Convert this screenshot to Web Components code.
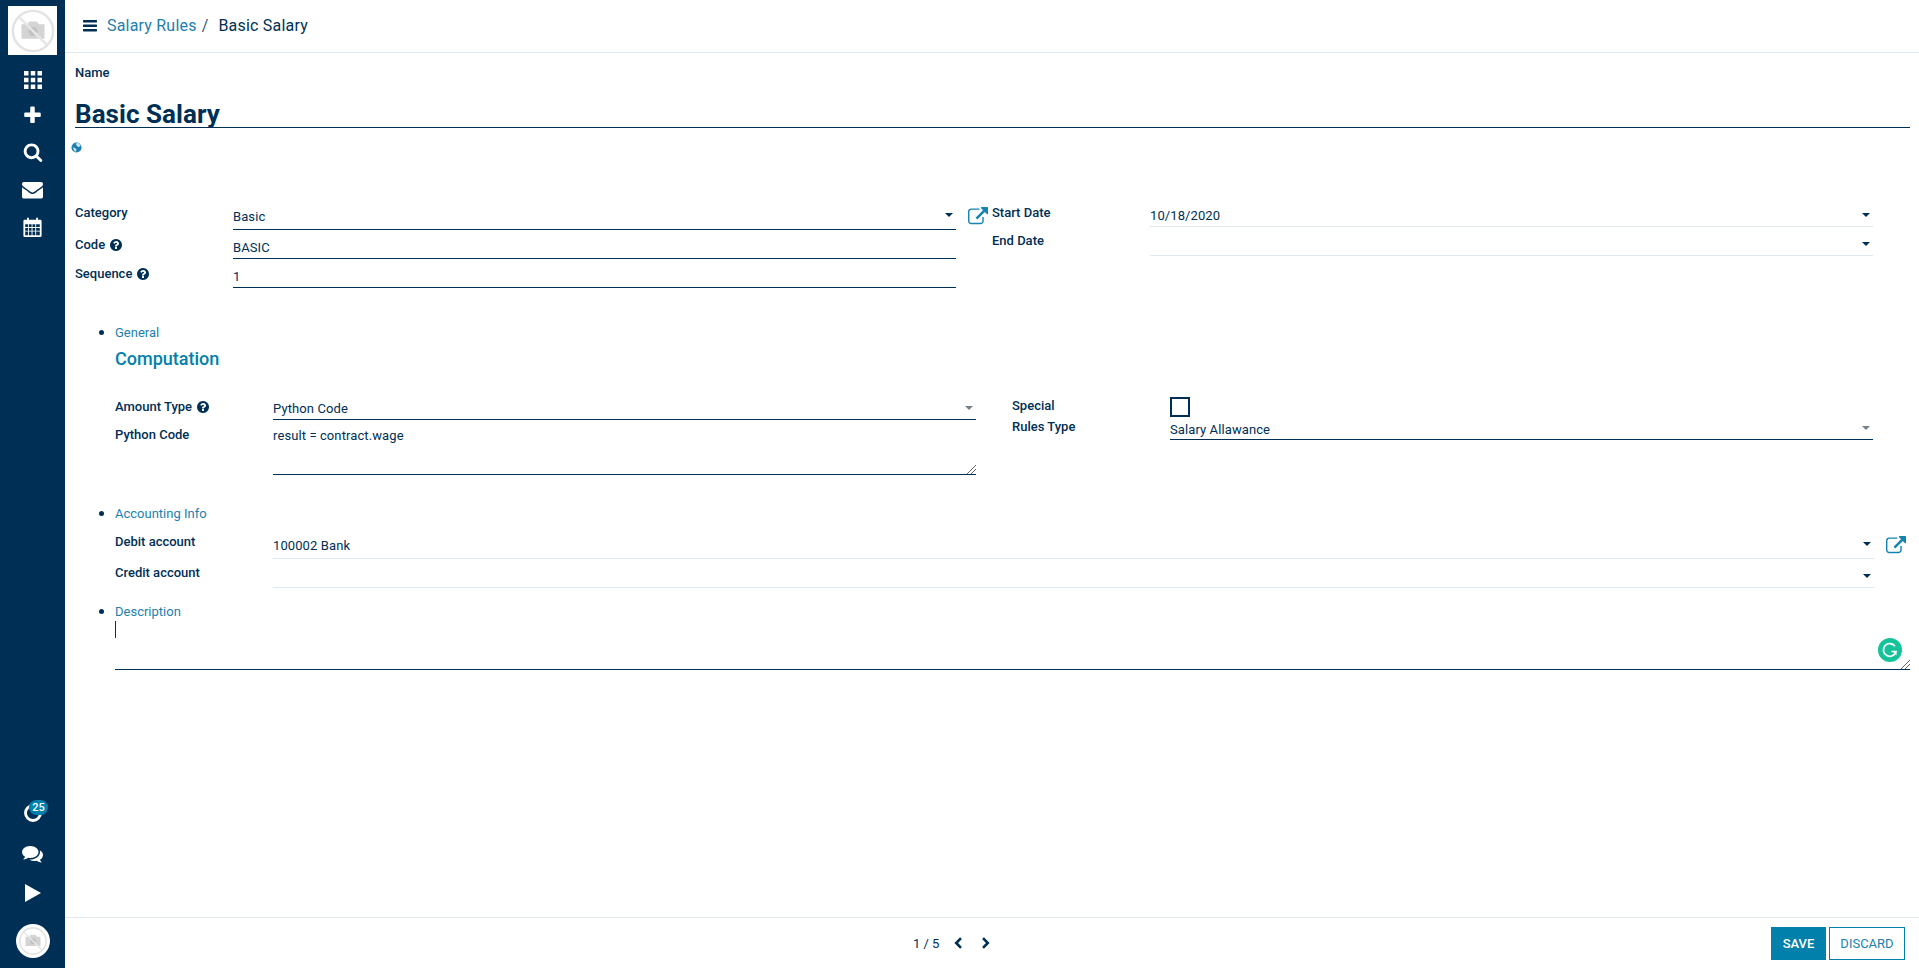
<!DOCTYPE html>
<html>
<head>
<meta charset="utf-8">
<title>Basic Salary</title>
<style>
  html, body { margin: 0; height: 100%; background: #fff; overflow: hidden; }
  body { font: 13px/15px Roboto, sans-serif; color: #002f55; }
</style>
</head>
<body>
<app-shell>
  <app-sidebar slot="side"></app-sidebar>
  <app-header slot="head" parent="Salary Rules" current="Basic Salary"></app-header>

  <title-field label="Name" value="Basic Salary"></title-field>

  <form-columns>
    <div slot="left">
      <form-field label="Category" value="Basic" caret style="--label-top:4px;--value-bottom:5px;--caret-bottom:12px"></form-field>
      <form-field label="Code" value="BASIC" help></form-field>
      <form-field label="Sequence" value="1" help></form-field>
    </div>
    <open-link slot="link"></open-link>
    <div slot="right">
      <form-field label="Start Date" value="10/18/2020" caret light style="--label-top:4px;--value-bottom:3px;--row:26px"></form-field>
      <form-field label="End Date" caret light style="--label-top:6px;--value-bottom:4px"></form-field>
    </div>
  </form-columns>

  <tab-page label="General" style="--page-top:37px">
    <h2-title>Computation</h2-title>
    <split-group>
      <div slot="left">
        <form-field label="Amount Type" value="Python Code" caret muted help style="--label-top:4px;--value-bottom:3px;--row:25px"></form-field>
        <form-field label="Python Code" value="result = contract.wage" multiline style="--label-top:7px;--row:55px"></form-field>
      </div>
      <div slot="right">
        <check-field label="Special"></check-field>
        <form-field label="Rules Type" value="Salary Allawance" caret muted style="--label-top:0;--value-bottom:2px;--row:21px"></form-field>
      </div>
    </split-group>
  </tab-page>

  <tab-page label="Accounting Info" style="--page-top:28px">
    <account-row>
      <form-field label="Debit account" value="100002 Bank" caret light style="--label-top:13px;--value-bottom:5px;--row:38px;--caret-bottom:12px"></form-field>
      <form-field label="Credit account" caret light style="--label-top:6px"></form-field>
      <open-link slot="link"></open-link>
    </account-row>
  </tab-page>

  <tab-page label="Description" style="--page-top:16px">
    <note-box></note-box>
  </tab-page>

  <app-footer slot="foot" page="1 / 5"></app-footer>
</app-shell>

<script>
const FA = {
  envelope: 'M1792 710v794q0 66-47 113t-113 47h-1472q-66 0-113-47t-47-113v-794q44 49 101 87 362 246 497 345 57 42 92.5 65.5t94.5 48 110 24.5h2q51 0 110-24.5t94.5-48 92.5-65.5q170-123 498-345 57-39 100-87zm0-294q0 79-49 151t-122 123q-376 261-468 325-10 7-42.5 30.5t-54 38-52 32.5-57.5 27-50 9h-2q-23 0-50-9t-57.5-27-52-32.5-54-38-42.5-30.5q-91-64-262-182.5t-205-142.5q-62-42-117-115.5t-55-136.5q0-78 41.5-130t118.5-52h1472q65 0 112.5 47t47.5 113z',
  search: 'M1216 832q0-185-131.5-316.5t-316.5-131.5-316.5 131.5-131.5 316.5 131.5 316.5 316.5 131.5 316.5-131.5 131.5-316.5zm512 832q0 52-38 90t-90 38q-54 0-90-38l-343-342q-179 124-399 124-143 0-273.5-55.5t-225-150-150-225-55.5-273.5 55.5-273.5 150-225 225-150 273.5-55.5 273.5 55.5 225 150 150 225 55.5 273.5q0 220-124 399l343 343q37 37 37 90z',
  plus: 'M1600 736v192q0 40-28 68t-68 28h-416v416q0 40-28 68t-68 28h-192q-40 0-68-28t-28-68v-416h-416q-40 0-68-28t-28-68v-192q0-40 28-68t68-28h416v-416q0-40 28-68t68-28h192q40 0 68 28t28 68v416h416q40 0 68 28t28 68z',
  external: 'M1408 928v320q0 119-84.5 203.5t-203.5 84.5h-832q-119 0-203.5-84.5t-84.5-203.5v-832q0-119 84.5-203.5t203.5-84.5h704q14 0 23 9t9 23v64q0 14-9 23t-23 9h-704q-66 0-113 47t-47 113v832q0 66 47 113t113 47h832q66 0 113-47t47-113v-320q0-14 9-23t23-9h64q14 0 23 9t9 23zm384-864v512q0 26-19 45t-45 19-45-19l-176-176-652 652q-10 10-23 10t-23-10l-114-114q-10-10-10-23t10-23l652-652-176-176q-19-19-19-45t19-45 45-19h512q26 0 45 19t19 45z',
  comments: 'M1408 768q0 139-94 257t-256.5 186.5-353.5 68.5q-86 0-176-16-124 88-278 128-36 9-86 16h-3q-11 0-20.5-8t-11.5-21q-1-3-1-6.5t.5-6.5 2-6l2.5-5 3.5-5.5 4-5 4.5-5 4-4.5q5-6 23-25t26-29.5 22.5-29 25-38.5 20.5-44q-124-72-195-177t-71-224q0-139 94-257t256.5-186.5 353.5-68.5 353.5 68.5 256.5 186.5 94 257zm384 256q0 120-71 224.5t-195 176.5q10 24 20.5 44t25 38.5 22.5 29 26 29.5 23 25q1 1 4 4.5t4.5 5 4 5 3.5 5.5l2.5 5 2 6 .5 6.5-1 6.5q-3 14-13 22t-22 7q-50-7-86-16-154-40-278-128-90 16-176 16-271 0-472-132 58 4 88 4 161 0 309-45t264-129q125-92 192-212t67-254q0-77-23-152 129 71 204 178t75 230z',
  question: 'M1024 1376v-192q0-14-9-23t-23-9h-192q-14 0-23 9t-9 23v192q0 14 9 23t23 9h192q14 0 23-9t9-23zm256-672q0-88-55.5-163t-138.5-116-170-41q-243 0-371 213-15 24 8 42l132 100q7 6 19 6 16 0 25-12 53-68 86-92 34-24 86-24 48 0 85.5 26t37.5 59q0 38-20 61t-68 45q-63 28-115.5 86.5t-52.5 125.5v36q0 14 9 23t23 9h192q14 0 23-9t9-23q0-19 21.5-49.5t54.5-49.5q32-18 49-28.5t46-35 44.5-48 28-60.5 12.5-81zm384 192q0 209-103 385.5t-279.5 279.5-385.5 103-385.5-103-279.5-279.5-103-385.5 103-385.5 279.5-279.5 385.5-103 385.5 103 279.5 279.5 103 385.5z'
};

const faIcon = (name, size, color) =>
  `<svg width="${size}" height="${size}" viewBox="0 0 1792 1792" fill="${color}"><path d="${FA[name]}"/></svg>`;

// grey "no picture" placeholder used for the company logo and the user avatar
const noImage = (size) => `
  <svg width="${size}" height="${size}" viewBox="0 0 48 48">
    <circle cx="24" cy="24" r="21" fill="none" stroke="#e3e3e3" stroke-width="2.6"/>
    <path d="M12 17h6l2-3h8l2 3h6v15H12z" fill="#d4d4d4"/>
    <circle cx="24" cy="24.500" r="4.800" fill="#c2c2c2"/>
    <path d="M10 10l28 28" stroke="#e6e6e6" stroke-width="2.6"/>
  </svg>`;

function define(tag, html, setup) {
  customElements.define(tag, class extends HTMLElement {
    constructor() {
      super();
      this.attachShadow({ mode: 'open' });
    }
    connectedCallback() {
      this.shadowRoot.innerHTML = typeof html === 'function' ? html(this) : html;
      if (setup) setup(this);
    }
  });
}

define('app-shell', `
  <style>
    :host { display: grid; grid-template-columns: 65px 1fr; grid-template-rows: 53px 1fr 51px; height: 968px; }
    .side { grid-row: 1 / 4; display: flex; }
    .body { padding-left: 10px; padding-right: 9px; min-width: 0; }
  </style>
  <div class="side"><slot name="side"></slot></div>
  <slot name="head"></slot>
  <div class="body"><slot></slot></div>
  <slot name="foot"></slot>
`);

define('app-sidebar', `
  <style>
    :host { display: flex; flex-direction: column; align-items: center; width: 65px; background: #002f55; padding: 6px 0 10px; box-sizing: border-box; }
    .logo { width: 49px; height: 49px; background: #fff; display: flex; align-items: center; justify-content: center; margin-bottom: 7px; }
    .item { height: 37px; width: 65px; display: flex; align-items: center; justify-content: center; position: relative; }
    .item.tight { height: 35px; }
    .item.lift { height: 35px; margin-bottom: 2px; }
    .low { height: 40px; }
    .space { flex: 1; }
    .badge { position: absolute; left: 29px; top: 7px; width: 19px; height: 14px; padding-top: 1px; border-radius: 8px; background: #0180ab; color: #fff; font: 500 11px/14px Roboto, sans-serif; text-align: center; }
    .avatar { width: 34px; height: 34px; border-radius: 50%; background: #fff; margin-top: 11px; display: flex; align-items: center; justify-content: center; }
  </style>
  <div class="logo">${noImage(46)}</div>
  <div class="item tight">
    <svg width="18" height="18" viewBox="0 0 18 18" fill="#fff">
      <rect width="4.500" height="4.500"/><rect x="6.750" width="4.500" height="4.500"/><rect x="13.500" width="4.500" height="4.500"/>
      <rect y="6.750" width="4.500" height="4.500"/><rect x="6.750" y="6.750" width="4.500" height="4.500"/><rect x="13.500" y="6.750" width="4.500" height="4.500"/>
      <rect y="13.500" width="4.500" height="4.500"/><rect x="6.750" y="13.500" width="4.500" height="4.500"/><rect x="13.500" y="13.500" width="4.500" height="4.500"/>
    </svg>
  </div>
  <div class="item">${faIcon('plus', 21, '#fff')}</div>
  <div class="item lift">${faIcon('search', 20, '#fff')}</div>
  <div class="item">${faIcon('envelope', 21, '#fff')}</div>
  <div class="item">
    <svg width="19" height="20" viewBox="0 0 20 22" fill="#fff">
      <path fill-rule="evenodd" d="M1.5 3H4V1.5a1 1 0 0 1 2 0V3h8V1.500a1 1 0 0 1 2 0V3h2.500A1.500 1.500 0 0 1 20 4.500V20.500A1.500 1.500 0 0 1 18.500 22h-17A1.500 1.500 0 0 1 0 20.500V4.500A1.500 1.500 0 0 1 1.500 3zM2 8v3h3V8zm4 0v3h3V8zm4 0v3h3V8zm4 0v3h4V8zM2 12v3h3v-3zm4 0v3h3v-3zm4 0v3h3v-3zm4 0v3h4v-3zM2 16v4h3v-4zm4 0v4h3v-4zm4 0v4h3v-4zm4 0v4h4v-4z"/>
    </svg>
  </div>
  <div class="space"></div>
  <div class="item low">
    <svg width="22" height="22" viewBox="0 0 22 22"><circle cx="11" cy="11" r="7.500" fill="none" stroke="#fff" stroke-width="2.800"/></svg>
    <span class="badge">25</span>
  </div>
  <div class="item low">${faIcon('comments', 21, '#fff')}</div>
  <div class="item low">
    <svg width="18" height="20" viewBox="0 0 18 20"><path d="M1 1l16 9-16 9z" fill="#fff"/></svg>
  </div>
  <div class="avatar">${noImage(30)}</div>
`);

define('app-header', (el) => `
  <style>
    :host { display: flex; align-items: center; height: 53px; box-sizing: border-box; border-bottom: 1px solid #dfe7f0; padding: 0 0 1px 18px; font-size: 16px; line-height: 20px; letter-spacing: .2px; }
    svg { margin-right: 10px; }
    a { color: #1d7fae; }
    .sep { margin: 0 10px 0 5px; color: #33587a; }
  </style>
  <svg width="14" height="12" viewBox="0 0 14 12" fill="#002f55"><rect width="14" height="2.400" rx=".6"/><rect y="4.500" width="14" height="2.400" rx=".6"/><rect y="9" width="14" height="2.400" rx=".6"/></svg>
  <a>${el.getAttribute('parent')}</a><span class="sep">/</span><span>${el.getAttribute('current')}</span>
`);

define('title-field', (el) => `
  <style>
    :host { display: block; height: 148px; }
    .label { font-weight: 500; padding-top: 12px; }
    .name { font: 700 26px/30px Roboto, sans-serif; margin-top: 19px; height: 28px; border-bottom: 1px solid #002f55; letter-spacing: .05px; }
    svg { display: block; margin: 14px 0 0 -4px; }
  </style>
  <div class="label">${el.getAttribute('label')}</div>
  <div class="name">${el.getAttribute('value')}</div>
  <svg width="11" height="11" viewBox="0 0 12 12">
    <circle cx="6" cy="6" r="5.500" fill="#1d7fae"/>
    <path d="M5 1.500l3-.5 2.500 2.500L9 5.500 7 5 6 3.500zM2 6l2.500.5 1.500 2-1 2.500-1.500-1.500z" fill="#cfe3ee"/>
  </svg>
`);

define('form-columns', `
  <style>
    :host { display: grid; grid-template-columns: 881px 36px 881px; height: 87px; }
    .link { padding: 6px 0 0 12px; }
  </style>
  <slot name="left"></slot>
  <div class="link"><slot name="link"></slot></div>
  <slot name="right"></slot>
`);

define('form-field', (el) => {
  const help = el.hasAttribute('help') ? `<svg width="12" height="12" viewBox="128 128 1536 1536" fill="#002f55"><path d="${FA.question}"/></svg>` : '';
  const caret = el.hasAttribute('caret') ? '<i class="caret"></i>' : '';
  const grip = el.hasAttribute('multiline') ? `<svg class="grip" width="9" height="9" viewBox="0 0 9 9" stroke="#666" fill="none"><path d="M0 9l9-9M4 9l5-5"/></svg>` : '';
  return `
  <style>
    :host { display: grid; grid-template-columns: var(--label-width, 158px) 1fr; height: var(--row, 29px); }
    .label { font-weight: 500; padding-top: var(--label-top, 7px); display: flex; align-items: flex-start; gap: 5px; }
    .label svg { margin-top: 1.500px; }
    .value { position: relative; border-bottom: 1px solid ${el.hasAttribute('light') ? '#dfe7f0' : '#002f55'}; padding: ${el.hasAttribute('multiline') ? '8px 0 0' : '0 0 var(--value-bottom, 3px)'}; display: flex; align-items: ${el.hasAttribute('multiline') ? 'flex-start' : 'flex-end'}; letter-spacing: .1px; }
    .caret { position: absolute; right: 3px; bottom: var(--caret-bottom, 9px); border: 4px solid transparent; border-top-color: ${el.hasAttribute('muted') ? '#73808c' : '#002f55'}; border-bottom: 0; }
    .grip { position: absolute; right: 0; bottom: 0; }
    span { display: block; }
  </style>
  <div class="label">${el.getAttribute('label')}${help}</div>
  <div class="value"><span>${el.getAttribute('value') || ''}</span>${caret}${grip}</div>`;
});

define('open-link', `
  <style>
    :host { display: block; width: 20px; height: 20px; }
    svg { display: block; }
  </style>
  ${faIcon('external', 20, '#1483b0')}
`);

define('tab-page', (el) => `
  <style>
    :host { display: block; position: relative; margin: var(--page-top, 0) 0 0 40px; }
    :host::before { content: ""; position: absolute; left: -16px; top: 5px; width: 5px; height: 5px; border-radius: 50%; background: #002f55; }
    .tab { color: #1d7fae; height: 15px; }
  </style>
  <div class="tab">${el.getAttribute('label')}</div>
  <slot></slot>
`);

define('h2-title', `
  <style>
    :host { display: block; color: #0180ab; font: 500 18px/22px Roboto, sans-serif; margin: 8px 0 25px; }
  </style>
  <slot></slot>
`);

define('split-group', `
  <style>
    :host { display: grid; grid-template-columns: 861px 861px; column-gap: 36px; height: 83px; }
  </style>
  <slot name="left"></slot>
  <slot name="right"></slot>
`);

define('check-field', (el) => `
  <style>
    :host { display: grid; grid-template-columns: 158px 1fr; height: 24px; }
    .label { font-weight: 500; padding-top: 3px; }
    .box { width: 16px; height: 16px; border: 2px solid #002f55; margin-top: 2px; }
  </style>
  <div class="label">${el.getAttribute('label')}</div>
  <div class="box"></div>
`);

define('account-row', `
  <style>
    :host { display: grid; grid-template-columns: 1759px 20px; column-gap: 12px; }
    .fields { display: block; }
    .link { padding-top: 15px; }
  </style>
  <div class="fields"><slot></slot></div>
  <div class="link"><slot name="link"></slot></div>
`);

define('note-box', `
  <style>
    :host { display: block; position: relative; height: 49px; margin-top: 1px; border-bottom: 1px solid #002f55; }
    .cursor { position: absolute; left: 0; top: 1px; width: 1px; height: 17px; background: #002f55; }
    .grammarly { position: absolute; right: 8px; bottom: 7px; }
    .grip { position: absolute; right: 0; bottom: 0; }
  </style>
  <div class="cursor"></div>
  <svg class="grammarly" width="24" height="24" viewBox="0 0 24 24">
    <circle cx="12" cy="12" r="12" fill="#15c39a"/>
    <path d="M17 8.200A6.400 6.400 0 1 0 18 13.500h-4.500" fill="none" stroke="#fff" stroke-width="1.700"/>
    <path d="M18.500 13.500v4l-3-3.500z" fill="#fff"/>
  </svg>
  <svg class="grip" width="9" height="9" viewBox="0 0 9 9" stroke="#666" fill="none"><path d="M0 9l9-9M4 9l5-5"/></svg>
`);

define('app-footer', (el) => `
  <style>
    :host { display: flex; align-items: center; box-sizing: border-box; height: 51px; border-top: 1px solid #dfe7f0; padding: 0 14px 0 848px; }
    .page { margin-right: 15px; }
    svg { display: block; }
    .next { margin-left: 18px; }
    .save, .discard { height: 33px; box-sizing: border-box; font: 500 13px/33px Roboto, sans-serif; text-align: center; }
    .save { margin-left: auto; width: 55px; background: #0180ab; color: #fff; }
    .discard { width: 76px; margin-left: 3px; border: 1px solid #0180ab; color: #1d7fae; font-weight: 400; line-height: 31px; }
  </style>
  <span class="page">${el.getAttribute('page')}</span>
  <svg width="9" height="12" viewBox="0 0 9 12" fill="none" stroke="#002f55" stroke-width="2.600"><path d="M7 1.200L2.200 6 7 10.800"/></svg>
  <svg class="next" width="9" height="12" viewBox="0 0 9 12" fill="none" stroke="#002f55" stroke-width="2.600"><path d="M2 1.200L6.800 6 2 10.800"/></svg>
  <span class="save">SAVE</span>
  <span class="discard">DISCARD</span>
`);
</script>
</body>
</html>
